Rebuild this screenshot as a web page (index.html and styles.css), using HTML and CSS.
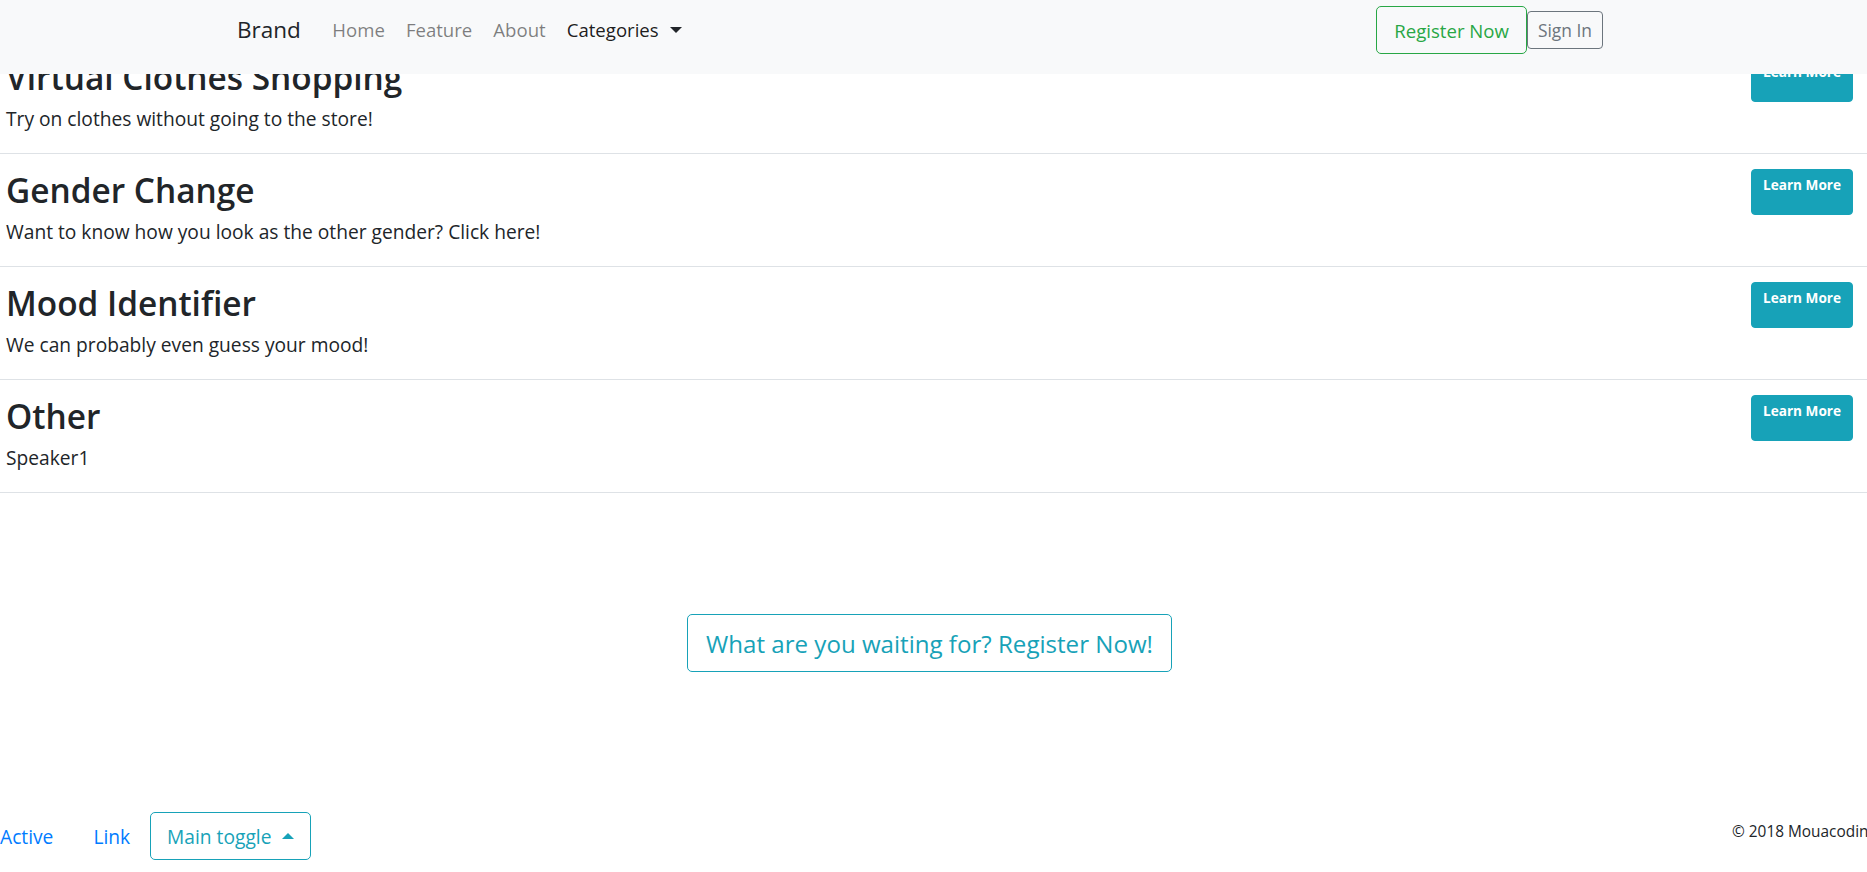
FILE: index.html
```html
<!DOCTYPE html>
<html lang="en">
<head>
<meta charset="utf-8">
<title>Brand</title>
<link rel="stylesheet" href="styles.css">
</head>
<body>
<nav class="navbar">
  <a class="brand" href="#">Brand</a>
  <ul class="nav">
    <li><a class="nav-link" href="#">Home</a></li>
    <li><a class="nav-link" href="#">Feature</a></li>
    <li><a class="nav-link" href="#">About</a></li>
    <li><a class="nav-link nav-link-active" href="#">Categories<span class="caret-down"></span></a></li>
  </ul>
  <div class="nav-actions">
    <button class="btn btn-register">Register Now</button>
    <button class="btn btn-signin">Sign In</button>
  </div>
</nav>

<main class="features">
  <div class="feature">
    <div class="feature-text">
      <h2 class="feature-title">Virtual Clothes Shopping</h2>
      <p class="feature-desc">Try on clothes without going to the store!</p>
    </div>
    <button class="btn-learn">Learn More</button>
  </div>
  <div class="feature">
    <div class="feature-text">
      <h2 class="feature-title">Gender Change</h2>
      <p class="feature-desc">Want to know how you look as the other gender? Click here!</p>
    </div>
    <button class="btn-learn">Learn More</button>
  </div>
  <div class="feature">
    <div class="feature-text">
      <h2 class="feature-title">Mood Identifier</h2>
      <p class="feature-desc">We can probably even guess your mood!</p>
    </div>
    <button class="btn-learn">Learn More</button>
  </div>
  <div class="feature">
    <div class="feature-text">
      <h2 class="feature-title">Other</h2>
      <p class="feature-desc">Speaker1</p>
    </div>
    <button class="btn-learn">Learn More</button>
  </div>
</main>

<section class="cta">
  <button class="btn-cta">What are you waiting for? Register Now!</button>
</section>

<footer class="footer">
  <div class="footer-nav">
    <a class="footer-link" href="#">Active</a>
    <a class="footer-link" href="#">Link</a>
    <button class="btn-toggle">Main toggle<span class="caret-up"></span></button>
  </div>
  <div class="copyright">© 2018 Mouacoding</div>
</footer>
</body>
</html>
```

FILE: styles.css
```css
* { box-sizing: border-box; }

html, body {
  margin: 0;
  padding: 0;
  overflow: hidden;
}

body {
  font-family: "Open Sans", "Noto Sans", sans-serif;
  color: #212529;
  background: #fff;
  width: 1867px;
  height: 872px;
}

a { text-decoration: none; }

/* ---------- navbar ---------- */
.navbar {
  position: fixed;
  top: 0;
  left: 0;
  right: 0;
  height: 74px;
  z-index: 10;
  background: #f8f9fa;
  display: flex;
  align-items: center;
  padding: 6px 264px 20px 237px;
}

.brand {
  font-size: 22.5px;
  line-height: 30px;
  color: #212529;
  margin-right: 21px;
}

.nav {
  list-style: none;
  margin: 0;
  padding: 0;
  display: flex;
  align-items: center;
}

.nav-link {
  display: flex;
  align-items: center;
  padding: 0 10.5px;
  font-size: 18.6px;
  line-height: 28px;
  color: rgba(0, 0, 0, 0.5);
}

.nav-link-active { color: rgba(0, 0, 0, 0.9); }

.caret-down {
  display: inline-block;
  margin-left: 11px;
  width: 0;
  height: 0;
  border-left: 6px solid transparent;
  border-right: 6px solid transparent;
  border-top: 6px solid #212529;
}

.nav-actions {
  margin-left: auto;
  display: flex;
  align-items: center;
}

.btn {
  font-family: inherit;
  background: transparent;
  border-radius: 5px;
  cursor: pointer;
}

.btn-register {
  height: 48px;
  padding: 0 17px;
  font-size: 18.6px;
  color: #28a745;
  border: 1px solid #28a745;
}

.btn-signin {
  height: 38px;
  padding: 0 10px;
  font-size: 17.4px;
  color: #6c757d;
  border: 1px solid #6c757d;
  border-radius: 4px;
}

/* ---------- features ---------- */
.features {
  padding-top: 41px;
}

.feature {
  display: flex;
  justify-content: space-between;
  align-items: flex-start;
  padding: 15px 14px 21px 6px;
  border-bottom: 1px solid #dee2e6;
}

.feature-title {
  margin: 0;
  font-size: 33.4px;
  font-weight: 600;
  line-height: 43px;
  color: #212529;
}

.feature-desc {
  margin: 6px 0 0;
  font-size: 19.2px;
  line-height: 27px;
}

.btn-learn {
  font-family: inherit;
  height: 46px;
  padding: 5px 11px 19px;
  font-size: 13.6px;
  font-weight: 700;
  line-height: 20px;
  color: #fff;
  background: #17a2b8;
  border: 1px solid #17a2b8;
  border-radius: 4px;
}

/* ---------- call to action ---------- */
.cta {
  padding: 121px 8px 0 0;
  display: flex;
  justify-content: center;
}

.btn-cta {
  font-family: inherit;
  height: 58px;
  padding: 0 18px;
  font-size: 24.1px;
  color: #17a2b8;
  background: #fff;
  border: 1px solid #17a2b8;
  border-radius: 5px;
}

/* ---------- footer ---------- */
.footer {
  margin-top: 140px;
  display: flex;
  justify-content: space-between;
  align-items: center;
}

.footer-nav {
  display: flex;
  align-items: baseline;
}

.footer-link {
  padding: 0 20px;
  font-size: 19.2px;
  color: #007bff;
}

.footer-link:first-child { padding-left: 0; }

.btn-toggle {
  font-family: inherit;
  display: flex;
  align-items: center;
  height: 48px;
  padding: 0 16px;
  font-size: 19.2px;
  color: #17a2b8;
  background: #fff;
  border: 1px solid #17a2b8;
  border-radius: 5px;
}

.caret-up {
  display: inline-block;
  margin-left: 11px;
  width: 0;
  height: 0;
  border-left: 6px solid transparent;
  border-right: 6px solid transparent;
  border-bottom: 6px solid #17a2b8;
}

.copyright {
  width: 135px;
  white-space: nowrap;
  font-size: 15.4px;
  line-height: 22px;
  margin-bottom: 8px;
}
```
